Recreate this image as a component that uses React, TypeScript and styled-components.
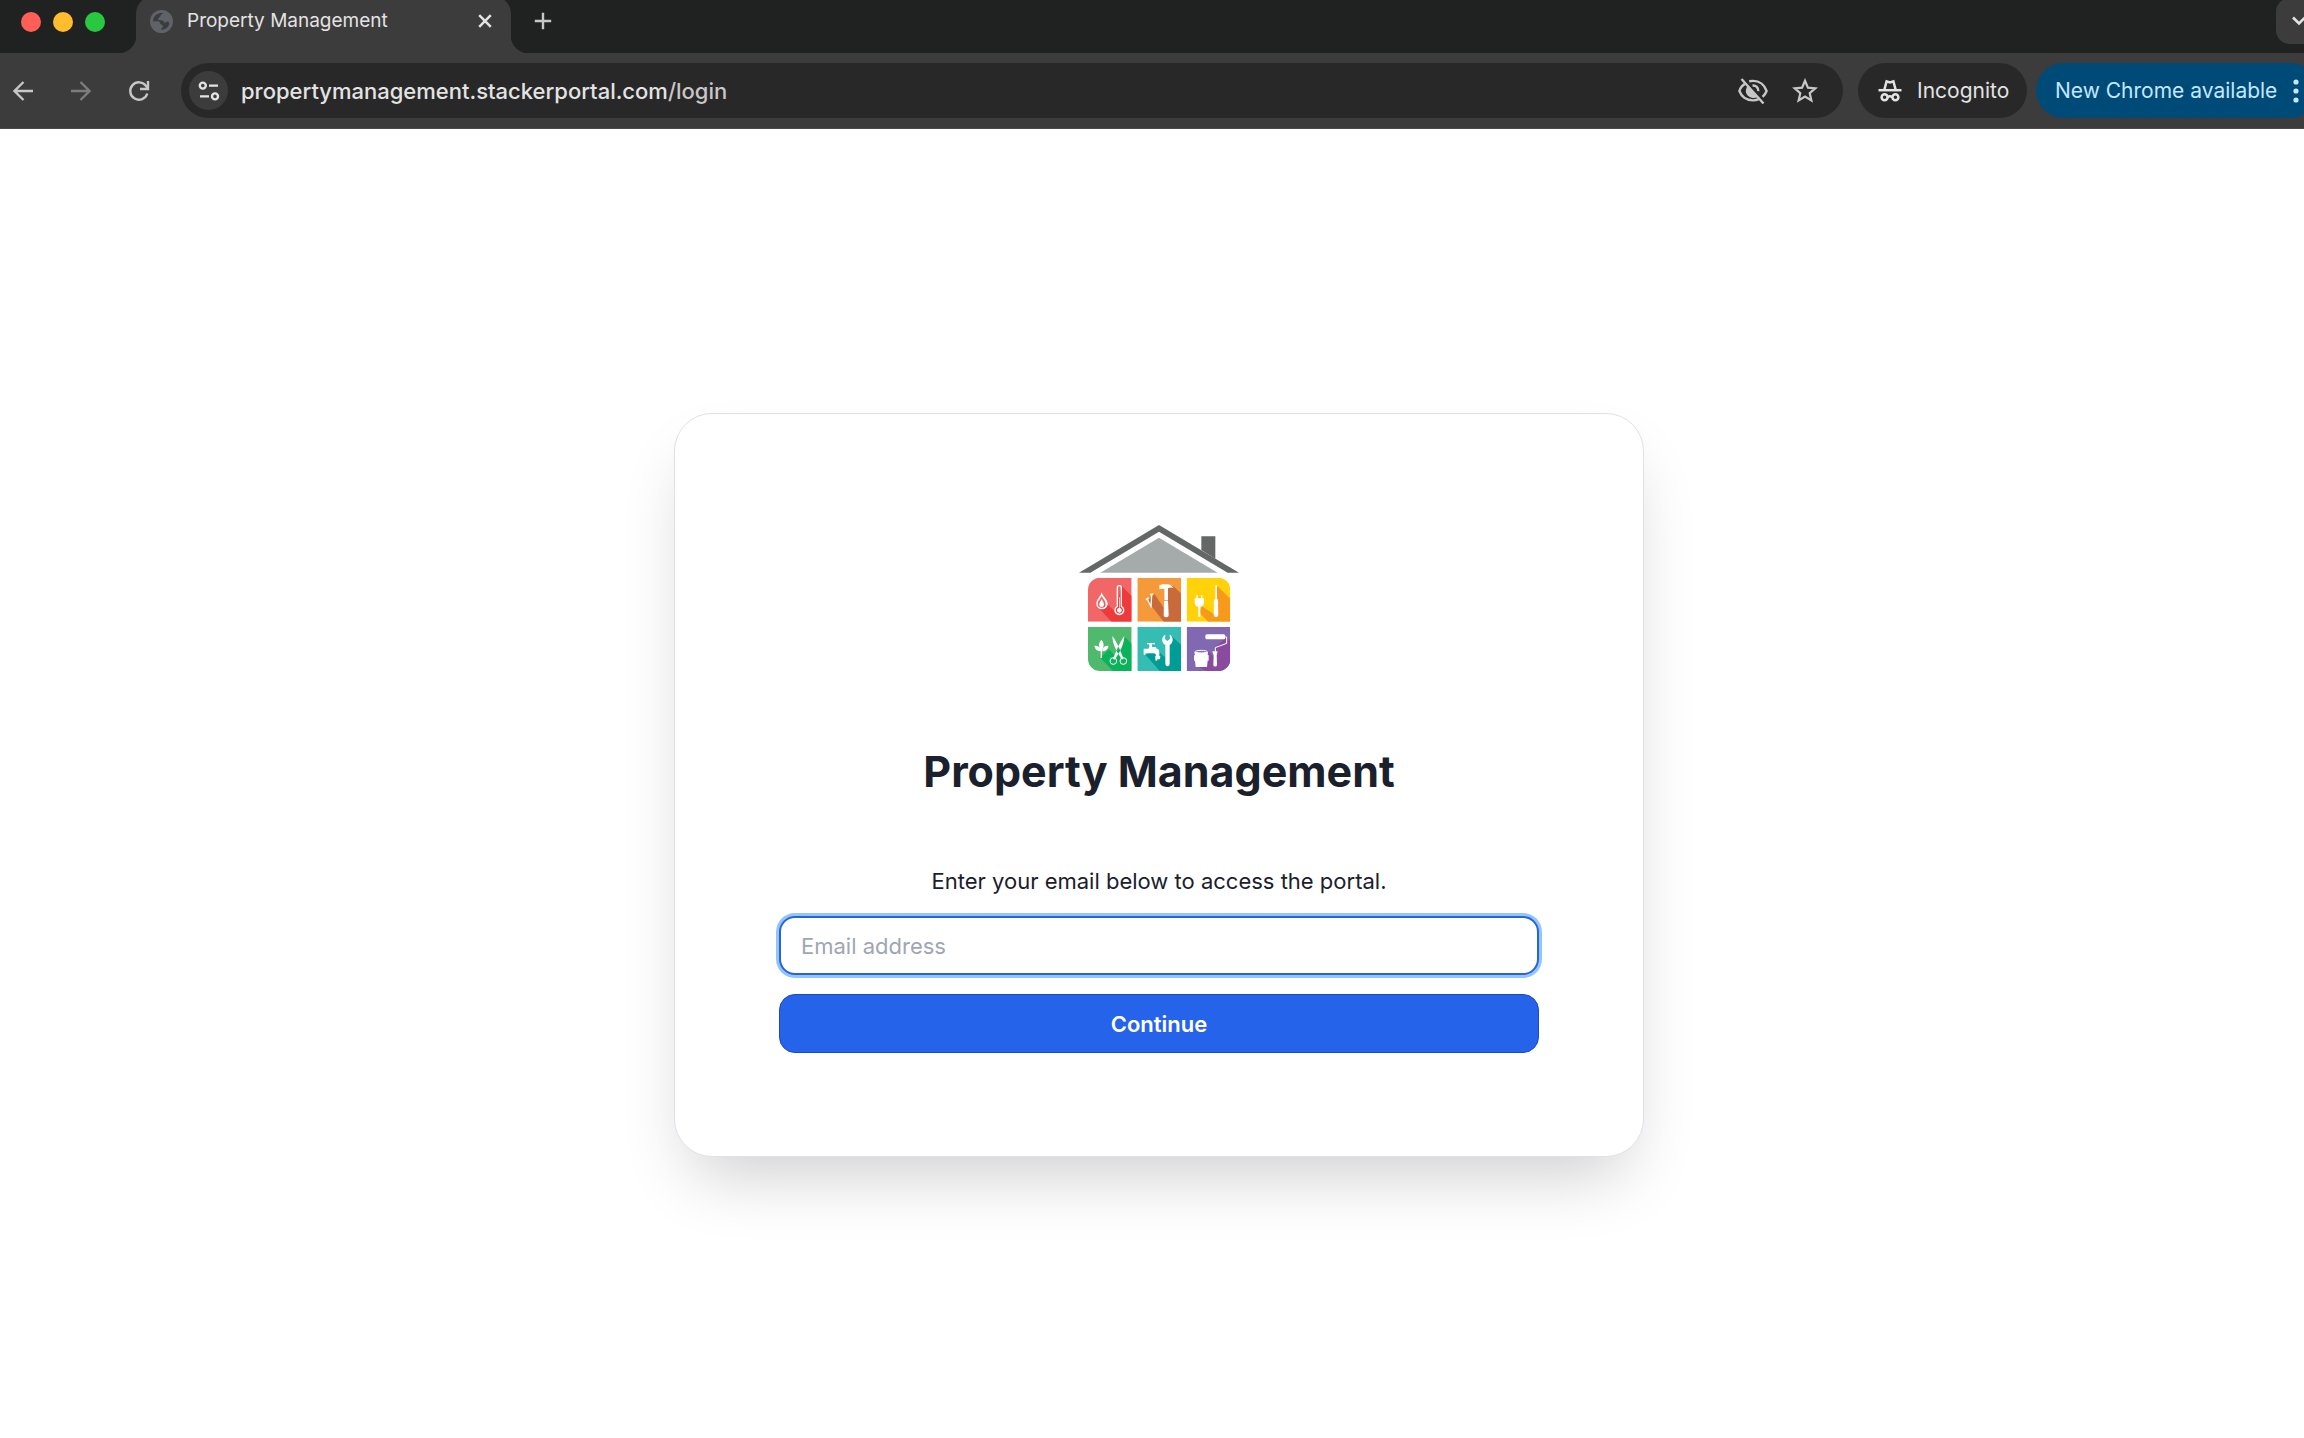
import React, { useState } from "react";
import styled, { createGlobalStyle, css } from "styled-components";

const GlobalStyle = createGlobalStyle`
  *, *::before, *::after { box-sizing: border-box; }
  body {
    margin: 0;
    background: #ffffff;
    font-family: Inter, "Liberation Sans", sans-serif;
    overflow: hidden;
  }
  button, input { font-family: inherit; }
`;

const Clip = styled.div`
  overflow: hidden;
`;

/* The window runs a little past the right edge of the screen. */
const BrowserWindow = styled.div`
  display: flex;
  flex-direction: column;
  width: calc(100% + 14px);
  min-height: 100vh;
`;

const TabStrip = styled.div`
  display: flex;
  align-items: stretch;
  height: 53px;
  background: #202221;
`;

const TrafficLights = styled.div`
  display: flex;
  gap: 12px;
  padding: 12px 31px 0 21px;
`;

const Light = styled.button<{ $color: string }>`
  width: 20px;
  height: 20px;
  padding: 0;
  border: 0;
  border-radius: 50%;
  background: ${(p) => p.$color};
`;

const Tab = styled.div`
  position: relative;
  display: flex;
  align-items: center;
  width: 375px;
  height: 57px;
  margin-top: -4px;
  padding: 0 17px 7px 14px;
  border-radius: 18px 18px 0 0;
  background: #3c3c3c;

  &::before,
  &::after {
    content: "";
    position: absolute;
    bottom: 0;
    width: 18px;
    height: 18px;
  }
  &::before {
    right: 100%;
    background: radial-gradient(circle at 0 0, transparent 18px, #3c3c3c 19px);
  }
  &::after {
    left: 100%;
    background: radial-gradient(circle at 100% 0, transparent 18px, #3c3c3c 19px);
  }
`;

const TabTitle = styled.span`
  flex: 1;
  margin-left: 14px;
  font-size: 19px;
  line-height: 28px;
  white-space: nowrap;
  color: #e3e3e3;
`;

const IconButton = styled.button<{ $color?: string; $size?: number }>`
  display: flex;
  align-items: center;
  justify-content: center;
  width: ${(p) => p.$size ?? 32}px;
  height: ${(p) => p.$size ?? 32}px;
  padding: 0;
  border: 0;
  background: none;
  color: ${(p) => p.$color ?? "#c7c7c7"};
`;

const NewTab = styled.div`
  flex: 1;
  padding: 5px 0 0 16px;
`;

const TabSearch = styled.button`
  display: flex;
  align-items: center;
  justify-content: center;
  width: 46px;
  height: 46px;
  margin: -2px -4px 0 0;
  padding: 0;
  border: 0;
  border-radius: 14px;
  background: #3c3c3c;
  color: #e3e3e3;
`;

const Toolbar = styled.div`
  display: flex;
  align-items: center;
  height: 76px;
  padding-left: 7px;
  border-bottom: 1px solid #4a4a4a;
  background: #3c3c3c;
`;

const NavButtons = styled.div`
  display: flex;
  gap: 26px;
  margin-right: 26px;
`;

const pill = css`
  display: flex;
  align-items: center;
  height: 55px;
  border: 0;
  border-radius: 28px;
  background: #282828;
`;

const AddressBar = styled.div`
  ${pill}
  flex: 1;
  padding: 0 22px 0 8px;
`;

const SiteInfo = styled.button`
  display: flex;
  align-items: center;
  justify-content: center;
  width: 39px;
  height: 39px;
  padding: 0;
  border: 0;
  border-radius: 50%;
  background: #3c3c3c;
  color: #e3e3e3;
`;

const Url = styled.span`
  flex: 1;
  margin-left: 13px;
  font-size: 22px;
  font-weight: 500;
  line-height: 32px;
  color: #e3e3e3;
`;

const UrlPath = styled.span`
  color: #c7c7c7;
`;

const AddressActions = styled.div`
  display: flex;
  gap: 20px;
`;

const Incognito = styled.div`
  ${pill}
  gap: 15px;
  width: 169px;
  margin-left: 15px;
  padding-left: 20px;
  font-size: 21px;
  color: #e3e3e3;
`;

const UpdateButton = styled.button`
  ${pill}
  justify-content: space-between;
  width: 282px;
  margin-left: 9px;
  padding: 0 19px;
  font-size: 21px;
  white-space: nowrap;
  background: #004a77;
  color: #c2e7ff;
`;

const Page = styled.main`
  display: flex;
  flex: 1;
  align-items: center;
  justify-content: center;
  padding-top: 3px;
  background: #ffffff;
`;

const Card = styled.form`
  display: flex;
  flex-direction: column;
  align-items: center;
  width: 970px;
  padding: 103px 104px;
  border: 1px solid #dce2eb;
  border-radius: 38px;
  background: #ffffff;
  box-shadow: 0 34px 68px -18px rgba(0, 6, 10, 0.2);
`;

const LogoFrame = styled.div`
  padding: 8px 0;

  svg { display: block; }
`;

const Title = styled.h1`
  margin: 63px 0 0;
  font-size: 43px;
  font-weight: 700;
  line-height: 58px;
  color: #1a202c;
`;

const Prompt = styled.label`
  margin-top: 64px;
  font-size: 22px;
  line-height: 35px;
  color: #1a202c;
`;

const EmailInput = styled.input`
  width: 100%;
  height: 59px;
  margin-top: 17px;
  padding: 0 20px;
  border: 2px solid #2a63d8;
  border-radius: 16px;
  outline: 0;
  box-shadow: 0 0 0 3px #93c5fd;
  font-size: 22px;
  color: #1a202c;

  &::placeholder {
    color: #a0a6b2;
    opacity: 1;
  }
`;

const SubmitButton = styled.button`
  width: 100%;
  height: 59px;
  margin-top: 19px;
  border: 1px solid #1e48c0;
  border-radius: 16px;
  background: #2563eb;
  font-size: 22px;
  font-weight: 600;
  color: #ffffff;
`;

const GlobeIcon = () => (
  <svg width="23" height="23" viewBox="0 0 24 24" aria-hidden="true">
    <circle cx="12" cy="12" r="12" fill="#5f6368" />
    <path
      d="M14 3c-1 1.500-3 1-3 3s-2 1.500-2.500 3 2 1.500 4 1.800 1.500 2.400 3 2.400 2-1.700 3.200-1.200 1.600 2 1.300 3.200c-1 3-3.500 5-6.500 5.400l-2-.4c.2-1.600 2-1.500 1.900-3.400s-2.400-1-2.900-3.300-4-1.500-7.300-1.500C3 8 6 3.600 11 3z"
      fill="#3c3c3c"
    />
  </svg>
);

const CloseIcon = () => (
  <svg width="14" height="14" viewBox="0 0 14 14" stroke="currentColor" strokeWidth="2.500" aria-hidden="true">
    <path d="M1.200 1.200l11.600 11.600M12.800 1.200L1.200 12.800" />
  </svg>
);

const PlusIcon = () => (
  <svg width="18" height="18" viewBox="0 0 18 18" stroke="currentColor" strokeWidth="2.400" aria-hidden="true">
    <path d="M9 .8v16.400M.8 9h16.400" />
  </svg>
);

const ChevronIcon = () => (
  <svg width="16" height="10" viewBox="0 0 16 10" fill="none" stroke="currentColor" strokeWidth="2.600" aria-hidden="true">
    <path d="M2 1.500l6 6 6-6" />
  </svg>
);

const ArrowIcon = ({ forward = false }: { forward?: boolean }) => (
  <svg width="20" height="20" viewBox="0 0 20 20" fill="none" stroke="currentColor" strokeWidth="2.300" aria-hidden="true">
    {forward ? <path d="M0 10h18M9.500 1l9 9-9 9" /> : <path d="M20 10H2M10.500 1l-9 9 9 9" />}
  </svg>
);

const ReloadIcon = () => (
  <svg width="22" height="22" viewBox="0 0 22 22" fill="none" stroke="currentColor" strokeWidth="2.400" aria-hidden="true">
    <path d="M19.300 13.500A8.700 8.700 0 1 1 18.200 6.200l1.500 2" />
    <path d="M20 1v8h-8" />
  </svg>
);

const TuneIcon = () => (
  <svg width="22" height="20" viewBox="0 0 22 20" fill="none" stroke="currentColor" strokeWidth="2.400" aria-hidden="true">
    <circle cx="4.800" cy="4.600" r="3" />
    <path d="M11 4.600h9M2 15.400h9" />
    <circle cx="17" cy="15.400" r="3" />
  </svg>
);

const EyeOffIcon = () => (
  <svg width="32" height="30" viewBox="0 0 32 30" fill="none" stroke="currentColor" strokeWidth="2.400" aria-hidden="true">
    <path d="M8.500 7.400C5.500 9.200 3.300 12 2.400 15c2 5.400 7 9.400 13.600 9.400 2.100 0 4-.4 5.800-1.200" />
    <path d="M12.200 5.300C13.400 5.100 14.700 4.900 16 4.900c6.600 0 11.600 4.400 13.600 10.100-.8 2.200-2.200 4.200-4 5.800" />
    <path d="M10.600 12.500c-2 4.500 2 9.500 7.400 8z" fill="currentColor" />
    <path d="M15.500 9.500c3.600-.3 6 2.300 5.800 5.600" />
    <path d="M4.500 3l22 24.500" />
  </svg>
);

const StarIcon = () => (
  <svg width="26" height="26" viewBox="0 0 26 26" fill="none" stroke="currentColor" strokeWidth="2.200" aria-hidden="true">
    <path d="M13 2.800l2.900 6.900 7.400.6-5.600 4.900 1.700 7.300-6.400-3.900-6.400 3.900 1.700-7.300-5.600-4.900 7.400-.6z" />
  </svg>
);

const IncognitoIcon = () => (
  <svg width="24" height="24" viewBox="0 0 24 24" fill="none" stroke="currentColor" strokeWidth="2.500" aria-hidden="true">
    <path d="M6.400 10.500L8.600 2.400l3.400 1 3.400-1 2.200 8.100" />
    <path d="M.5 11.200h23" />
    <circle cx="6.600" cy="18.200" r="3" />
    <circle cx="17.400" cy="18.200" r="3" />
    <path d="M9.700 17.800c1.400-.7 3.200-.7 4.600 0" />
  </svg>
);

const DotsIcon = () => (
  <svg width="6" height="26" viewBox="0 0 6 26" fill="currentColor" aria-hidden="true">
    <circle cx="3" cy="4" r="2.600" />
    <circle cx="3" cy="13" r="2.600" />
    <circle cx="3" cy="22" r="2.600" />
  </svg>
);

const HouseLogo = () => (
  <svg width="160" height="146" viewBox="58 45 480 438" role="img" aria-label="Property Management logo">
    <defs>
      <clipPath id="tiles">
        <path d="M85 239a36 36 0 0 1 36-36h95v132H85zM233 203h131v132H233zM381 203h95a36 36 0 0 1 36 36v96H381zM85 351h131v132h-95a36 36 0 0 1-36-36zM233 351h131v132H233zM381 351h131v96a36 36 0 0 1-36 36h-95z" />
      </clipPath>
    </defs>
    <path d="M425 79h42v67l-42-26z" fill="#636766" />
    <path d="M58 188L298 45l240 143h-34L298 65 92 188z" fill="#636766" />
    <path d="M122 188L298 83l176 105z" fill="#a5abab" />
    <g clipPath="url(#tiles)">
      <path d="M85 203h131v132H85z" fill="#f16667" />
      <path d="M186 228l30 30v77h-60l-38-40 24-14 24 24z" fill="#ee3a3a" />
      <path d="M233 203h131v132H233z" fill="#f49a3a" />
      <path d="M340 228l24 22v85h-52l-48-62 20-22 28 42 4-60z" fill="#c96a3b" />
      <path d="M381 203h131v132H381z" fill="#ffd20a" />
      <path d="M473 228l39 38v69h-66l-28-28 8-18 36 22z" fill="#f79a1c" />
      <path d="M85 351h131v132H85z" fill="#4fb96d" />
      <path d="M193 379l23 22v82h-56l-38-40 26-26 18 20z" fill="#0ab35a" />
      <path d="M233 351h131v132H233z" fill="#35bdb4" />
      <path d="M336 378l28 26v79h-64l-42-48 30-20 26 26z" fill="#009d97" />
      <path d="M381 351h131v132H381z" fill="#8069b0" />
      <path d="M498 380l14 14v89h-74l-32-20 38-40 30 30-6-40z" fill="#8a4a9e" />
    </g>
    <g fill="#ffffff">
      <path d="M126 247c4 14 18 22 18 34a17 17 0 0 1-34 0c0-12 12-20 16-34zm0 10c-4 10-12 15-12 24a12 12 0 0 0 24 0c0-9-8-14-12-24z" fillRule="evenodd" />
      <path d="M126 267c2 7 7 10 7 17a7 7 0 0 1-14 0c0-7 5-10 7-17z" />
      <path d="M171 288v-55a8 8 0 0 1 16 0v55a15 15 0 1 1-16 0zm4-55v57a11 11 0 1 0 8 0v-57a4 4 0 0 0-8 0z" fillRule="evenodd" />
      <circle cx="179" cy="301" r="7" />
      <path d="M178 262h2v36h-2z" />

      <path d="M299 226c6-4 12-4 24-3 8 0 14 4 18 12-6-4-10-3-16 0v36h-11v-35h-7l-8 2z" />
      <path d="M313 272h12l2 42a7 7 0 0 1-15 0z" />
      <path d="M258 266l8-4 2 4-3 2 12 24-3 2-12-24-3 1zM271 252l10-2v4l-3 1-2 35h-4l2-34h-3z" />

      <path d="M410 255h4v10h10v-10h4v10h5v12c0 8-4 12-11 14v29h-6v-29c-7-2-11-6-11-14v-12h5z" />
      <path d="M467 226h5v42h2c2 6 2 12 1 18l1 28a7 7 0 0 1-14 0l1-28c-1-6-1-12 2-18h2z" />

      <path d="M125 389c9 9 9 22 0 32-9-10-9-23 0-32zM104 407c12-1 19 5 20 17-11 0-18-6-20-17zM147 407c-12-1-19 5-20 17 11 0 18-6 20-17zM123 418h4v26h-4z" />
      <path d="M158 378c8 10 16 26 22 40l12 28-5 3-15-24c-8-15-14-31-14-47zM194 378c-8 10-16 26-22 40l-12 28 5 3 15-24c8-15 14-31 14-47z" />

      <path d="M262 399h24v4h-9v8h11l3 5h2c6 2 7 10 6 22h3l-1 10h-14v-10h2c0-6-2-8-8-8h-24v4h-5v-18h14l3-5v-8h-7z" />
      <circle cx="290" cy="449" r="3" />
      <path d="M317 374l-1 13 7 6 8-6-1-13c12 5 12 24 0 31v57a6 6 0 0 1-13 0v-57c-13-7-12-26 0-31z" />

      <rect x="437" y="373" width="60" height="15" rx="5" />
      <path d="M458 424h16l-3 12 1 28a5 5 0 0 1-11 0l1-28z" />
      <path d="M404 426h41l-1 8 3 2v16h-3l-2 19h-34l-2-19h-3v-16h3z" />
    </g>
    <g fill="none" stroke="#ffffff">
      <circle cx="161" cy="453" r="10" strokeWidth="3" />
      <circle cx="191" cy="453" r="10" strokeWidth="3" />
      <path d="M497 381h4v19l-34 13v12" strokeWidth="3" />
      <ellipse cx="424.500" cy="425" rx="18" ry="4" fill="#8a6fb2" strokeWidth="3" />
    </g>
  </svg>
);

export default function App() {
  const [email, setEmail] = useState("");

  return (
    <Clip>
      <GlobalStyle />
      <BrowserWindow>
        <TabStrip>
          <TrafficLights>
            <Light type="button" aria-label="Close window" $color="#ff5f57" />
            <Light type="button" aria-label="Minimize window" $color="#febc2e" />
            <Light type="button" aria-label="Zoom window" $color="#28c840" />
          </TrafficLights>
          <Tab>
            <GlobeIcon />
            <TabTitle>Property Management</TabTitle>
            <IconButton type="button" aria-label="Close tab" $color="#e3e3e3" $size={18}>
              <CloseIcon />
            </IconButton>
          </Tab>
          <NewTab>
            <IconButton type="button" aria-label="New tab">
              <PlusIcon />
            </IconButton>
          </NewTab>
          <TabSearch type="button" aria-label="Search tabs">
            <ChevronIcon />
          </TabSearch>
        </TabStrip>
        <Toolbar>
          <NavButtons>
            <IconButton type="button" aria-label="Back">
              <ArrowIcon />
            </IconButton>
            <IconButton type="button" aria-label="Forward" $color="#7d7d7d">
              <ArrowIcon forward />
            </IconButton>
            <IconButton type="button" aria-label="Reload">
              <ReloadIcon />
            </IconButton>
          </NavButtons>
          <AddressBar>
            <SiteInfo type="button" aria-label="View site information">
              <TuneIcon />
            </SiteInfo>
            <Url>
              propertymanagement.stackerportal.com<UrlPath>/login</UrlPath>
            </Url>
            <AddressActions>
              <IconButton type="button" aria-label="Third-party cookies blocked">
                <EyeOffIcon />
              </IconButton>
              <IconButton type="button" aria-label="Bookmark this tab">
                <StarIcon />
              </IconButton>
            </AddressActions>
          </AddressBar>
          <Incognito>
            <IncognitoIcon />
            Incognito
          </Incognito>
          <UpdateButton type="button">
            New Chrome available
            <DotsIcon />
          </UpdateButton>
        </Toolbar>
        <Page>
          <Card onSubmit={(event) => event.preventDefault()}>
            <LogoFrame>
              <HouseLogo />
            </LogoFrame>
            <Title>Property Management</Title>
            <Prompt htmlFor="email">Enter your email below to access the portal.</Prompt>
            <EmailInput
              id="email"
              type="email"
              placeholder="Email address"
              value={email}
              onChange={(event) => setEmail(event.target.value)}
            />
            <SubmitButton type="submit">Continue</SubmitButton>
          </Card>
        </Page>
      </BrowserWindow>
    </Clip>
  );
}
